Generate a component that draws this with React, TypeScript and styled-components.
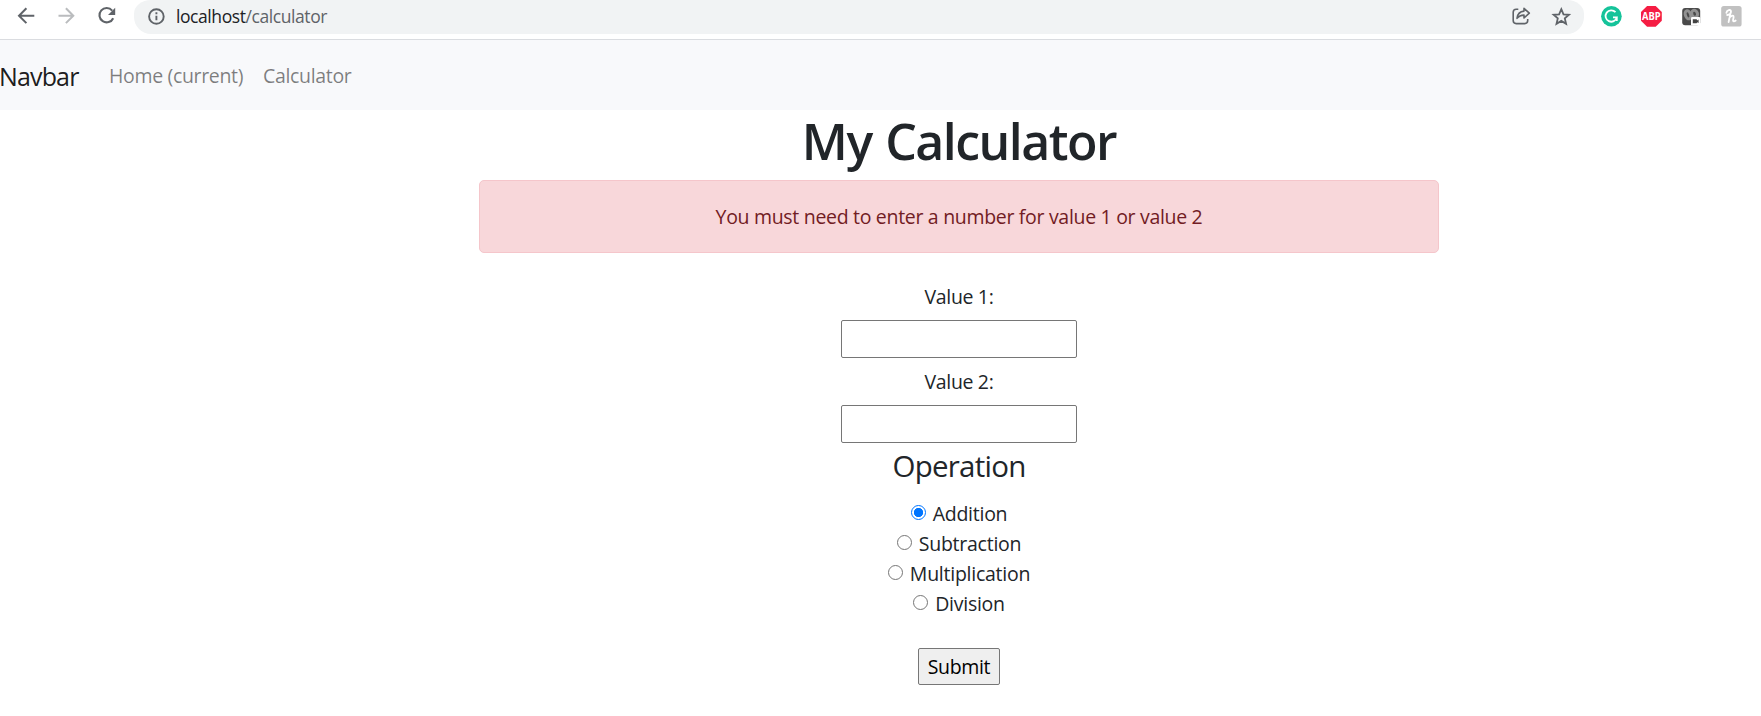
import React, { useState } from "react";
import styled, { createGlobalStyle } from "styled-components";

const GlobalStyle = createGlobalStyle`
  *, *::before, *::after { box-sizing: border-box; }
  html, body { margin: 0; padding: 0; background: #fff; overflow: hidden; }
  body {
    font-family: "Segoe UI", "Open Sans", "Noto Sans", sans-serif;
    font-size: 19.5px;
    font-weight: 400;
    line-height: 30px;
    color: #212529;
  }
`;

const Page = styled.div`
  height: 716px;
`;

const BrowserBar = styled.header`
  display: flex;
  height: 40px;
  padding-left: 14px;
  border-bottom: 1px solid #dadce0;
  background: #fff;
`;

const NavIcons = styled.div`
  display: flex;
  gap: 16px;
  padding-top: 4px;
  width: 120px;
`;

const Icon = styled.svg`
  display: block;
  flex: none;
  width: 24px;
  height: 24px;
`;

const AddressBar = styled.div`
  display: flex;
  align-items: flex-start;
  width: 1450px;
  height: 34px;
  padding: 4px 11px 0 10px;
  border-radius: 17px;
  border-top-left-radius: 17px 14px;
  border-top-right-radius: 17px 14px;
  background: #f1f3f4;
`;

const Url = styled.span`
  flex: 1;
  margin-left: 8px;
  font-size: 17.5px;
  line-height: 25px;
  letter-spacing: -0.42px;
  color: #5f6368;
  b { font-weight: inherit; color: #202124; }
`;

const AddressActions = styled.div`
  display: flex;
  gap: 16px;
`;

const Extensions = styled.div`
  display: flex;
  gap: 16px;
  padding: 4px 0 0 15px;
`;

const Navbar = styled.nav`
  display: flex;
  align-items: center;
  height: 70px;
  padding-top: 2px;
  background: #f8f9fb;
`;

const Brand = styled.a`
  width: 110px;
  margin-left: -1px;
  font-size: 25px;
  letter-spacing: -0.85px;
  color: rgba(0, 0, 0, 0.9);
  white-space: nowrap;
`;

const NavLink = styled.a<{ $width: number }>`
  width: ${(p) => p.$width}px;
  letter-spacing: -0.33px;
  color: rgba(0, 0, 0, 0.5);
  white-space: nowrap;
`;

const Main = styled.main`
  width: 960px;
  margin-left: 479px;
  text-align: center;
`;

const Title = styled.h1`
  margin: 0 0 9px;
  padding-top: 1px;
  font-size: 50px;
  font-weight: 600;
  line-height: 60px;
  letter-spacing: -1.5px;
  word-spacing: 2px;
`;

const Alert = styled.div`
  height: 73px;
  padding: 21px 20px 19px;
  border: 1px solid #f5c6cb;
  border-radius: 5px;
  background: #f8d7da;
  color: #721c24;
  letter-spacing: -0.31px;
`;

const Form = styled.form`
  display: flex;
  flex-direction: column;
  align-items: center;
  padding-top: 29px;
`;

const Label = styled.label`
  margin-bottom: 8px;
  letter-spacing: -0.35px;
`;

const NumberInput = styled.input`
  width: 236px;
  height: 38px;
  margin: 0 0 9px;
  padding: 2px 3px;
  border: 1px solid #767676;
  border-radius: 2px;
  background: #fff;
  font: inherit;
  outline: none;
`;

const Legend = styled.h3`
  margin: -4px 0 15px;
  font-size: 29.5px;
  font-weight: 400;
  line-height: 36px;
  letter-spacing: -0.75px;
`;

const Option = styled.label`
  display: flex;
  height: 30px;
  gap: 7px;
  letter-spacing: -0.25px;
`;

const Radio = styled.input`
  appearance: none;
  width: 15px;
  height: 15px;
  margin: 6px 0 0;
  border: 1px solid #767676;
  border-radius: 50%;
  background: #fff;
  &:checked {
    border: 1.5px solid #0075ff;
    background: radial-gradient(circle, #0075ff 0 4.3px, #fff 5px);
  }
`;

const Submit = styled.button`
  width: 82px;
  height: 37px;
  margin-top: 29px;
  padding: 0;
  border: 1px solid #767676;
  border-radius: 2px;
  background: #efefef;
  color: #000;
  font: inherit;
  letter-spacing: -0.35px;
`;

const AbpText = styled.text`
  font: 700 10.5px "Open Sans", sans-serif;
  fill: #fff;
`;

const operations = ["Addition", "Subtraction", "Multiplication", "Division"];

export default function App() {
  const [operation, setOperation] = useState("Addition");
  return (
    <Page>
      <GlobalStyle />
      <BrowserBar>
        <NavIcons>
          <Icon viewBox="0 0 24 24" fill="none" stroke="#5f6368" strokeWidth="2">
            <path d="M20.3 11.7H5.5M12.4 4.3 5 11.7l7.4 7.4" />
          </Icon>
          <Icon viewBox="0 0 24 24" fill="none" stroke="#babcbe" strokeWidth="2">
            <path d="M4.5 11.7h14.8M11.9 4.3l7.4 7.4-7.4 7.4" />
          </Icon>
          <Icon viewBox="0 0 24 24">
            <path d="M18.2 6.6A7.2 7.2 0 1 0 19.2 14.2" fill="none" stroke="#5f6368" strokeWidth="2.1" />
            <path d="M21.2 3.8v7.2H14z" fill="#5f6368" />
          </Icon>
        </NavIcons>
        <AddressBar>
          <Icon viewBox="0 0 24 24" fill="none" stroke="#5f6368" strokeWidth="1.9">
            <circle cx="12.4" cy="12.5" r="7.3" />
            <path d="M12.4 11.7v4.6M12.4 8.3v1.9" />
          </Icon>
          <Url><b>localhost</b>/calculator</Url>
          <AddressActions>
            <Icon viewBox="0 0 24 24" fill="none" stroke="#5f6368" strokeWidth="1.6" strokeLinejoin="round">
              <path d="M9.3 5.2H7.2a3 3 0 0 0-3 3v8.4a3 3 0 0 0 3 3h8.5a3 3 0 0 0 3-3v-1.5" />
              <path d="M15 4.4 20.3 9.2 15 14v-2.9c-3.4 0-5.3 1-7 3.2.5-4.1 2.6-6.8 7-7.2z" />
            </Icon>
            <Icon viewBox="0 0 24 24" fill="none" stroke="#5f6368" strokeWidth="1.8">
              <path d="m12.3 5.2 2.2 5.1 5.5.5-4.2 3.6 1.3 5.4-4.8-2.9-4.8 2.9 1.3-5.4-4.2-3.6 5.5-.5z" />
            </Icon>
          </AddressActions>
        </AddressBar>
        <Extensions>
          <Icon viewBox="0 0 24 24">
            <circle cx="12.4" cy="12.3" r="10.3" fill="#15c39a" />
            <path d="M16.5 8.2a5.7 5.7 0 1 0 1.3 5.2H14M17.8 13.2v3.8" fill="none" stroke="#fff" strokeWidth="1.8" />
          </Icon>
          <Icon viewBox="0 0 24 24">
            <path d="M8.1 2h8.6l6.1 6.1v8.6l-6.1 6.1H8.1L2 16.7V8.1z" fill="#f51d43" />
            <AbpText x="12.4" y="16.1" textAnchor="middle" textLength="18.6" lengthAdjust="spacingAndGlyphs">ABP</AbpText>
          </Icon>
          <Icon viewBox="0 0 24 24">
            <rect x="3.2" y="4" width="18" height="17.2" rx="3" fill="#4a4a4a" />
            <g fill="none" stroke="#929292" strokeWidth="3">
              <ellipse cx="9" cy="10.8" rx="2.6" ry="4.2" transform="rotate(-20 9 10.8)" />
              <ellipse cx="15.6" cy="9.8" rx="2.8" ry="3.6" transform="rotate(-20 15.6 9.8)" />
            </g>
            <rect x="12" y="13" width="9.2" height="8.6" rx="1.2" fill="#fff" />
            <path d="M13.8 15.2h3.6q.6 0 .6.6v.6l1.6-.8v3.4l-1.6-.8v.4q0 .6-.6.6h-3.6z" fill="#444" />
          </Icon>
          <Icon viewBox="0 0 24 24">
            <rect x="2.2" y="2" width="20.4" height="20.6" rx="2.6" fill="#c1c1c1" />
            <path d="M7.4 8.8c.3-2.6 4.4-4 4.6-1.4.1 1.4-1.2 3.2-3.8 3.6M11.8 8 9.6 18M10.2 14.4c1-2.6 4.6-4 4.4-1.2l-.5 2.8c-.2 1.9 1.3 1.7 2.6.5" fill="none" stroke="#fff" strokeWidth="1.8" strokeLinecap="round" />
          </Icon>
        </Extensions>
      </BrowserBar>
      <Navbar>
        <Brand>Navbar</Brand>
        <NavLink $width={154}>Home (current)</NavLink>
        <NavLink $width={100}>Calculator</NavLink>
      </Navbar>
      <Main>
        <Title>My Calculator</Title>
        <Alert>You must need to enter a number for value 1 or value 2</Alert>
        <Form onSubmit={(e) => e.preventDefault()}>
          <Label htmlFor="value1">Value 1:</Label>
          <NumberInput id="value1" />
          <Label htmlFor="value2">Value 2:</Label>
          <NumberInput id="value2" />
          <Legend>Operation</Legend>
          {operations.map((name) => (
            <Option key={name}>
              <Radio
                type="radio"
                name="operation"
                checked={operation === name}
                onChange={() => setOperation(name)}
              />
              <span>{name}</span>
            </Option>
          ))}
          <Submit type="submit">Submit</Submit>
        </Form>
      </Main>
    </Page>
  );
}
